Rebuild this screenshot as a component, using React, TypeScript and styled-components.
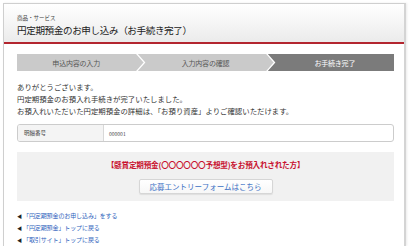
import React from "react";
import styled, { createGlobalStyle } from "styled-components";

const Global = createGlobalStyle`
  html, body { margin: 0; padding: 0; background: #fff; }
  body { font-family: "Noto Sans CJK JP", "Noto Sans", sans-serif; color: #333; }
  * { box-sizing: border-box; }
`;

const Frame = styled.div`
  margin: 3px 0 0 3px;
  width: 403px;
  height: 243px;
  border: 1px solid #cfcfcf;
  border-bottom: none;
  border-right: 2px solid #d4d4d4;
  box-shadow: 1px 0 2px rgba(0,0,0,0.08);
  background: #fff;
  overflow: hidden;
`;

const Header = styled.div`
  height: 40px;
  padding: 11px 0 0 13px;
  background: linear-gradient(#ffffff, #f3f3f3 60%, #ebebeb);
  border-bottom: 2px solid #b3262f;
`;

const Category = styled.div`
  font-size: 5.5px;
  line-height: 6px;
  color: #444;
`;

const Title = styled.h1`
  margin: 3px 0 0;
  font-size: 9.6px;
  line-height: 12px;
  font-weight: normal;
  color: #222;
  letter-spacing: -0.4px;
`;

const Body = styled.div`
  padding: 10px 10px 0 13px;
`;

const Steps = styled.div`
  display: flex;
  height: 17px;
`;

const Step = styled.div<{ $active?: boolean }>`
  flex: 1;
  display: flex;
  align-items: center;
  justify-content: center;
  background: ${(p) => (p.$active ? "#7b7b7b" : "#cacaca")};
  color: ${(p) => (p.$active ? "#fff" : "#555")};
  font-size: 7px;
  letter-spacing: -0.2px;
`;

const SepSvg = styled.svg`
  display: block;
  flex: 0 0 11px;
`;

const Separator = ({ left, right }: { left: string; right: string }) => (
  <SepSvg width="11" height="17" viewBox="0 0 11 17">
    <rect x="0" y="0" width="11" height="17" fill={right} />
    <polygon points="0,0 1.5,0 9.5,8.5 1.5,17 0,17" fill={left} />
    <polyline points="1.5,-0.5 9.5,8.5 1.5,17.5" fill="none" stroke="#fff" strokeWidth="1.3" />
  </SepSvg>
);

const Message = styled.p`
  margin: 10px 0 0;
  font-size: 7.4px;
  line-height: 12px;
  color: #333;
`;

const Table = styled.div`
  margin-top: 7px;
  display: flex;
  height: 18px;
  border: 1px solid #cccccc;
  border-radius: 3px;
  overflow: hidden;
`;

const HeadCell = styled.div`
  width: 86px;
  display: flex;
  align-items: center;
  padding-left: 6px;
  background: #f4f4f4;
  border-right: 1px solid #d8d8d8;
  font-size: 5.5px;
  color: #444;
`;

const ValueCell = styled.div`
  flex: 1;
  display: flex;
  align-items: center;
  padding-left: 5px;
  font-size: 5px;
  color: #444;
`;

const Notice = styled.div`
  margin-top: 10px;
  height: 49px;
  background: #f1f1f1;
  display: flex;
  flex-direction: column;
  align-items: center;
  padding-top: 7px;
`;

const NoticeText = styled.div`
  font-size: 7.6px;
  font-weight: bold;
  color: #c8102e;
  line-height: 11px;
  letter-spacing: -0.2px;
`;

const EntryButton = styled.button`
  margin-top: 9px;
  width: 134px;
  height: 15px;
  border: 1px solid #d6d6d6;
  border-radius: 2px;
  background: linear-gradient(#ffffff, #f7f7f7);
  box-shadow: 0 1px 1px rgba(0,0,0,0.08);
  color: #3b70c4;
  font-family: inherit;
  font-size: 7.5px;
  padding: 0;
  cursor: pointer;
`;

const Links = styled.ul`
  list-style: none;
  margin: 8px 0 0;
  padding: 0;
`;

const LinkItem = styled.li`
  display: flex;
  align-items: center;
  height: 12px;
  font-size: 6px;
`;

const Bullet = styled.span`
  font-size: 5px;
  color: #222;
  width: 5px;
  margin-right: 1px;
`;

const Link = styled.a`
  color: #2f64bd;
  text-decoration: none;
  letter-spacing: -0.1px;
`;

export default function App() {
  const light = "#cacaca";
  const dark = "#7b7b7b";
  return (
    <>
      <Global />
      <Frame>
        <Header>
          <Category>商品・サービス</Category>
          <Title>円定期預金のお申し込み（お手続き完了）</Title>
        </Header>
        <Body>
          <Steps>
            <Step>申込内容の入力</Step>
            <Separator left={light} right={light} />
            <Step>入力内容の確認</Step>
            <Separator left={light} right={dark} />
            <Step $active>お手続き完了</Step>
          </Steps>
          <Message>
            ありがとうございます。
            <br />
            円定期預金のお預入れ手続きが完了いたしました。
            <br />
            お預入れいただいた円定期預金の詳細は、「お預り資産」よりご確認いただけます。
          </Message>
          <Table>
            <HeadCell>明細番号</HeadCell>
            <ValueCell>000001</ValueCell>
          </Table>
          <Notice>
            <NoticeText>【懸賞定期預金(〇〇〇〇〇〇予想型)をお預入れされた方】</NoticeText>
            <EntryButton>応募エントリーフォームはこちら</EntryButton>
          </Notice>
          <Links>
            <LinkItem>
              <Bullet>◀</Bullet>
              <Link href="#">「円定期預金のお申し込み」をする</Link>
            </LinkItem>
            <LinkItem>
              <Bullet>◀</Bullet>
              <Link href="#">「円定期預金」トップに戻る</Link>
            </LinkItem>
            <LinkItem>
              <Bullet>◀</Bullet>
              <Link href="#">「取引サイト」トップに戻る</Link>
            </LinkItem>
          </Links>
        </Body>
      </Frame>
    </>
  );
}
